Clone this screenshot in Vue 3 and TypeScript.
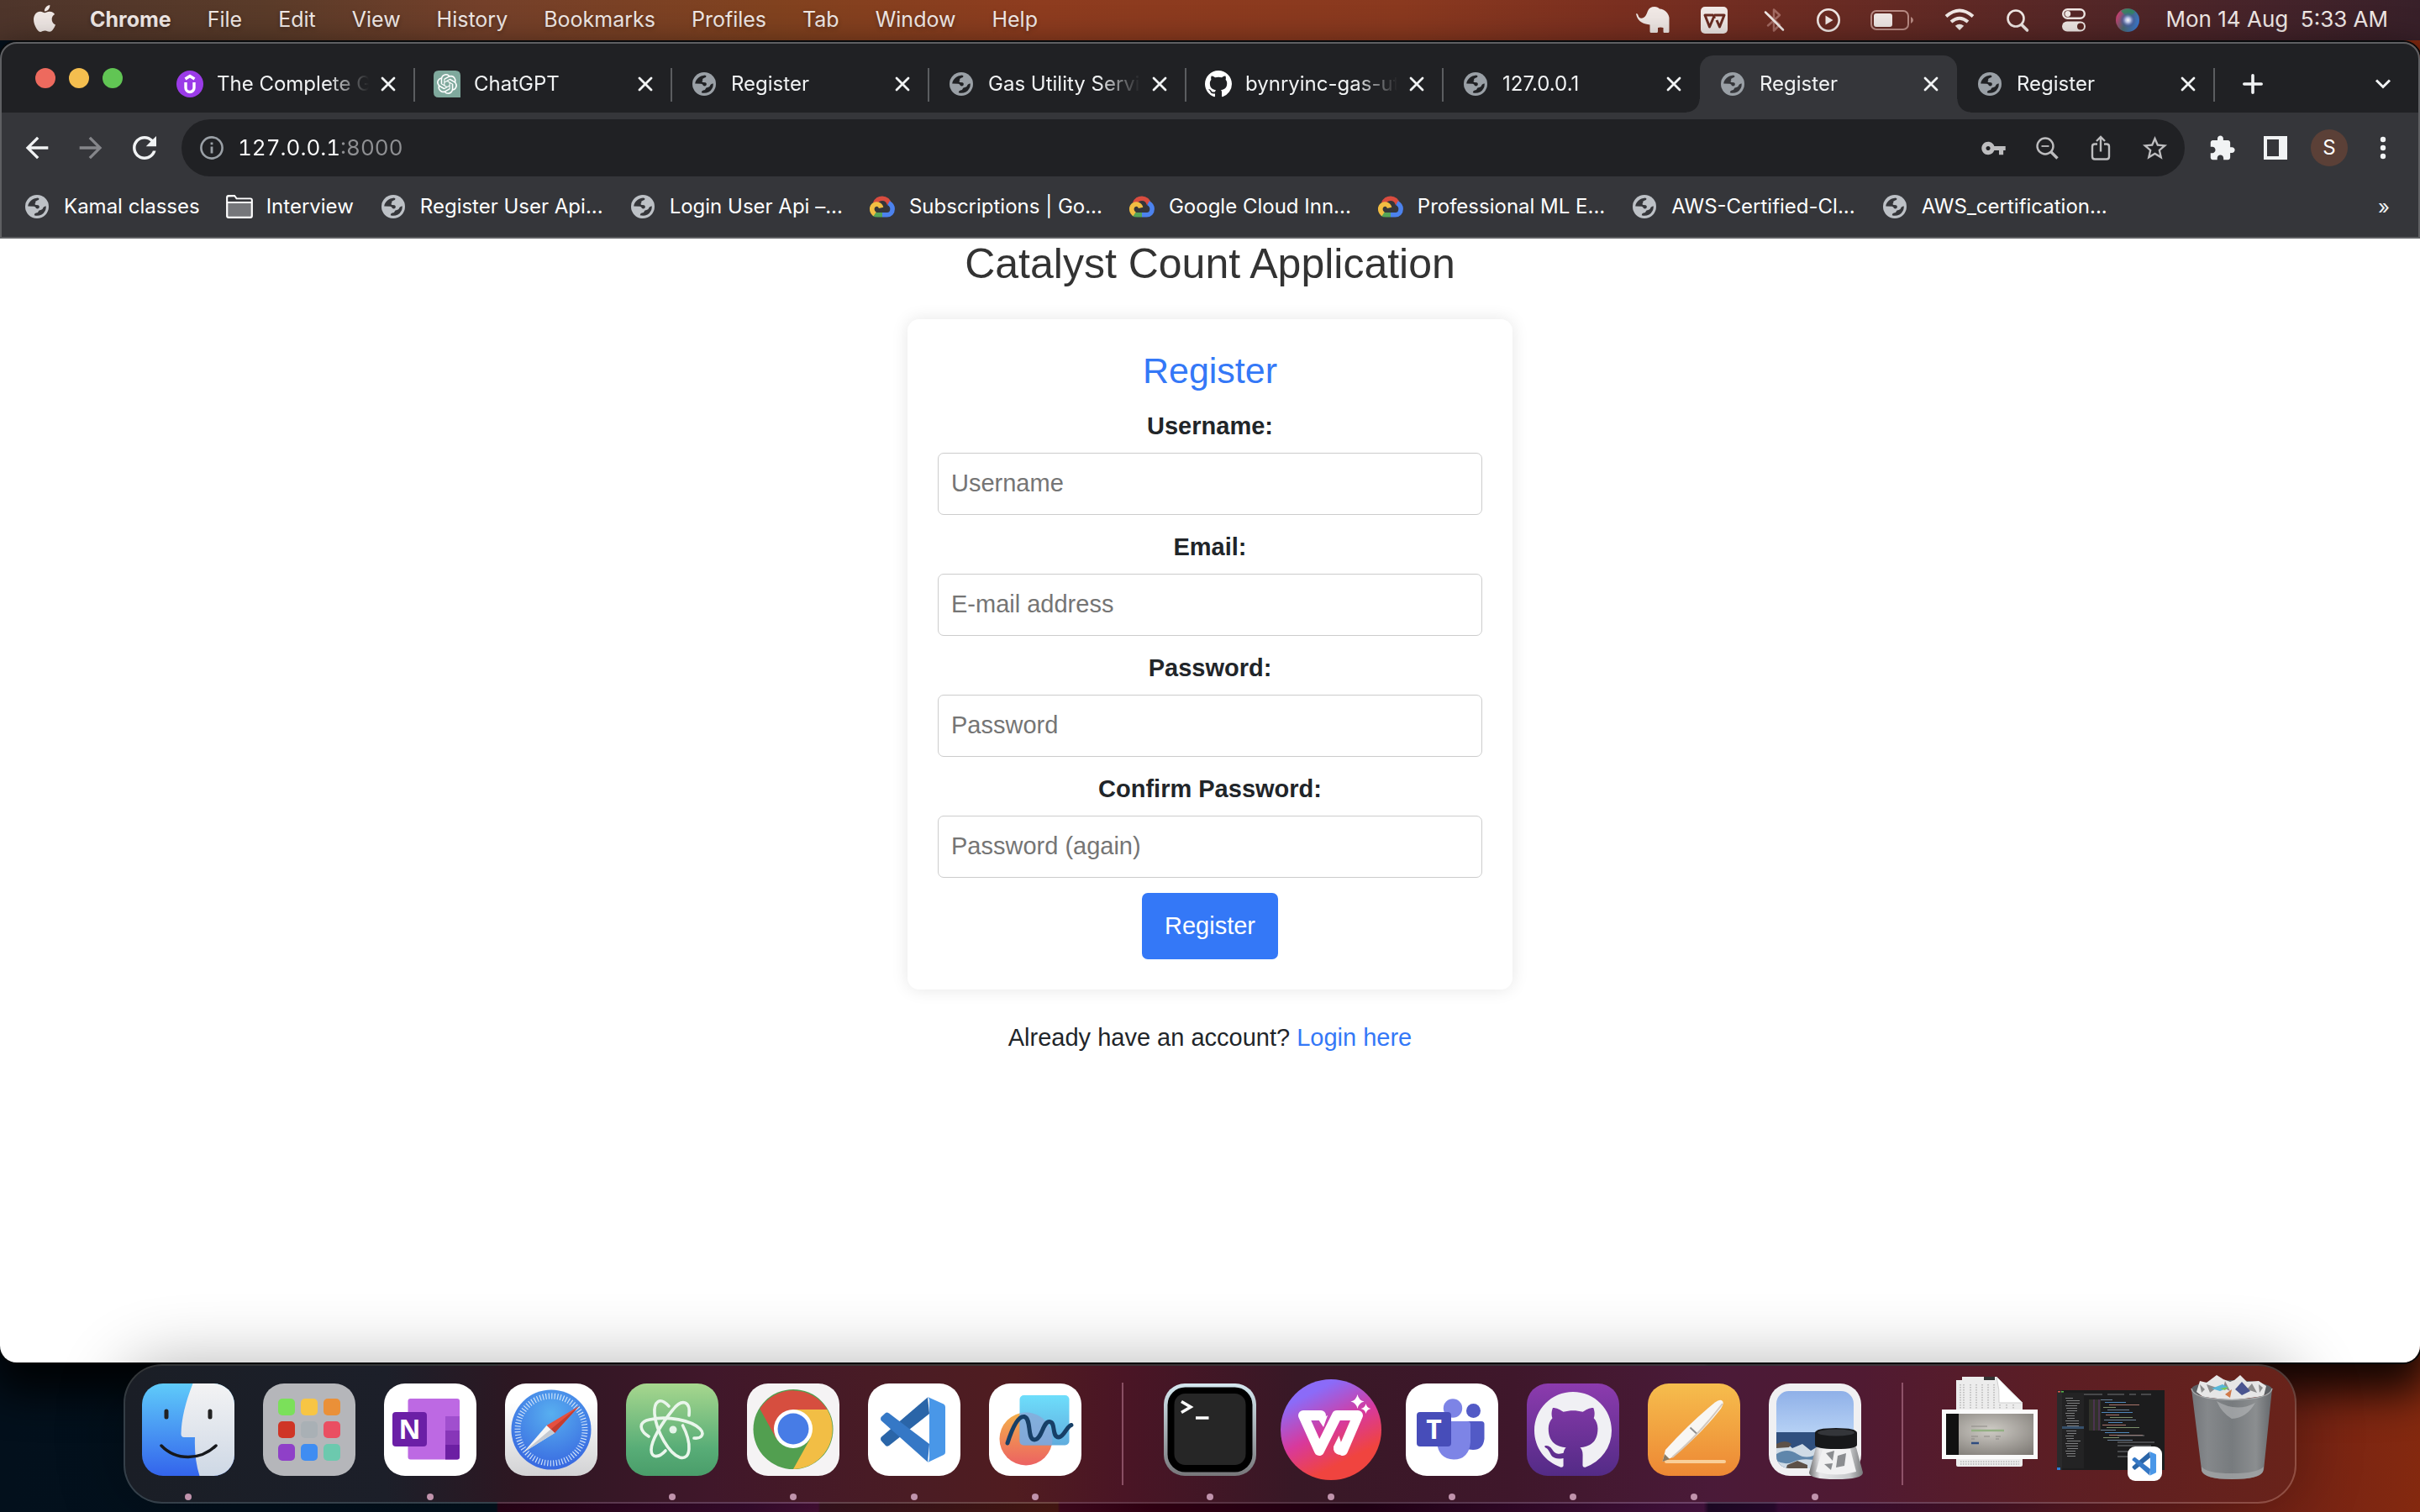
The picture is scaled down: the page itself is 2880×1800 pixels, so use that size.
<script setup lang="ts">
import { ref } from 'vue'

interface Tab {
  title: string
  icon: 'udemy' | 'chatgpt' | 'globe' | 'github'
  active?: boolean
}

interface Bookmark {
  title: string
  icon: 'globe' | 'folder' | 'cloud'
}

interface Field {
  id: string
  label: string
  placeholder: string
  type: string
}

const menus = ['File', 'Edit', 'View', 'History', 'Bookmarks', 'Profiles', 'Tab', 'Window', 'Help']

const tabs: Tab[] = [
  { title: 'The Complete G', icon: 'udemy' },
  { title: 'ChatGPT', icon: 'chatgpt' },
  { title: 'Register', icon: 'globe' },
  { title: 'Gas Utility Servi', icon: 'globe' },
  { title: 'bynryinc-gas-ut', icon: 'github' },
  { title: '127.0.0.1', icon: 'globe' },
  { title: 'Register', icon: 'globe', active: true },
  { title: 'Register', icon: 'globe' },
]

const bookmarks: Bookmark[] = [
  { title: 'Kamal classes', icon: 'globe' },
  { title: 'Interview', icon: 'folder' },
  { title: 'Register User Api...', icon: 'globe' },
  { title: 'Login User Api –...', icon: 'globe' },
  { title: 'Subscriptions | Go...', icon: 'cloud' },
  { title: 'Google Cloud Inn...', icon: 'cloud' },
  { title: 'Professional ML E...', icon: 'cloud' },
  { title: 'AWS-Certified-Cl...', icon: 'globe' },
  { title: 'AWS_certification...', icon: 'globe' },
]

const fields: Field[] = [
  { id: 'username', label: 'Username:', placeholder: 'Username', type: 'text' },
  { id: 'email', label: 'Email:', placeholder: 'E-mail address', type: 'email' },
  { id: 'password', label: 'Password:', placeholder: 'Password', type: 'password' },
  { id: 'password2', label: 'Confirm Password:', placeholder: 'Password (again)', type: 'password' },
]

const address = ref('127.0.0.1:8000')

const githubPath =
  'M8 0C3.58 0 0 3.58 0 8c0 3.54 2.29 6.53 5.47 7.59.4.07.55-.17.55-.38 0-.19-.01-.82-.01-1.49-2.01.37-2.53-.49-2.69-.94-.09-.23-.48-.94-.82-1.13-.28-.15-.68-.52-.01-.53.63-.01 1.08.58 1.23.82.72 1.21 1.87.87 2.33.66.07-.52.28-.87.51-1.07-1.78-.2-3.64-.89-3.64-3.95 0-.87.31-1.59.82-2.15-.08-.2-.36-1.02.08-2.12 0 0 .67-.21 2.2.82.64-.18 1.32-.27 2-.27.68 0 1.36.09 2 .27 1.53-1.04 2.2-.82 2.2-.82.44 1.1.16 1.92.08 2.12.51.56.82 1.27.82 2.15 0 3.07-1.87 3.75-3.65 3.95.29.25.54.73.54 1.48 0 1.07-.01 1.93-.01 2.2 0 .21.15.46.55.38A8.013 8.013 0 0 0 16 8c0-4.42-3.58-8-8-8z'

const launchpad = [
  '#7be05a', '#f7c544', '#ea9038',
  '#cf3526', '#a9b0b5', '#ea4f62',
  '#8f40c8', '#3f8df2', '#6cc9ae',
].map((fill, i) => ({ fill, x: 18 + (i % 3) * 27, y: 18 + Math.floor(i / 3) * 27 }))

const codeColors = ['#6a7f95', '#4f86b8', '#a8746a', '#7c8f6a']
const codeRows = Array.from({ length: 17 }, (_, i) => ({
  y: 24 + i * 3,
  x: 48 + ((i * 5) % 12),
  w: 14 + ((i * 11) % 32),
  fill: codeColors[i % 4],
}))
const fileRows = Array.from({ length: 24 }, (_, i) => ({ y: 22 + i * 3, x: 6 + (i % 3), w: 9 + ((i * 7) % 8) }))
</script>

<template>
  <div class="desktop">
    <header class="menubar">
      <button class="menu apple" aria-label="Apple menu">
        <svg width="26" height="32" viewBox="2.2 0 19.6 24"><path fill="currentColor" d="M12.152 6.896c-.948 0-2.415-1.078-3.96-1.04-2.04.027-3.91 1.183-4.961 3.014-2.117 3.675-.546 9.103 1.519 12.09 1.013 1.454 2.208 3.09 3.792 3.039 1.52-.065 2.09-.987 3.935-.987 1.831 0 2.35.987 3.96.948 1.637-.026 2.676-1.48 3.676-2.948 1.156-1.688 1.636-3.325 1.662-3.415-.039-.013-3.182-1.221-3.22-4.857-.026-3.04 2.48-4.494 2.597-4.559-1.429-2.09-3.623-2.324-4.39-2.376-2-.156-3.675 1.09-4.61 1.09zM15.53 3.83c.843-1.012 1.4-2.427 1.245-3.83-1.207.052-2.662.805-3.532 1.818-.78.896-1.454 2.338-1.273 3.714 1.338.104 2.715-.688 3.559-1.701" /></svg>
      </button>
      <button class="menu app">Chrome</button>
      <button v-for="m in menus" :key="m" class="menu">{{ m }}</button>
      <div class="status">
        <svg width="42" height="48" viewBox="0 0 42 48"><path fill="currentColor" d="M1 16.500C2 16 3 16.500 3.500 18C4 21.500 7 22.500 10 21C12.500 19.500 13.500 17 15 13C16.500 9.500 19 8 23 8C26 8 27.500 9 29 10.500C35 11 39.500 15 40.500 21V37.500Q40.500 39 39 39H34.500Q33.500 39 33.500 37.500V33Q30 32 27 33V37.500Q27 39 25.500 39H19Q17.500 39 17.500 37.500V29.500C11 28.500 3 27 1 16.500Z" /></svg>
        <svg width="36" height="48" viewBox="0 0 36 48"><rect y="8" width="32" height="32" rx="5" fill="currentColor" /><path d="M15 18H5L10.500 32L16.500 18H28L22.500 32L19 24M15 18L16.500 22" fill="none" stroke="#6a2c22" stroke-width="3" stroke-linejoin="round" /></svg>
        <svg width="30" height="48" viewBox="0 0 30 48" fill="none" stroke-linecap="round"><path d="M8 17L22 29.500L15 36.500V11.500L22 18L8 30.500" stroke="#a36a62" stroke-width="2.500" stroke-linejoin="round" /><path d="M5 14.500L26 35.500" stroke="currentColor" stroke-width="2.500" /></svg>
        <svg width="28" height="48" viewBox="0 0 28 48"><circle cx="14" cy="24" r="12.700" fill="none" stroke="currentColor" stroke-width="2.600" /><path d="M10.500 18.500L19.500 24L10.500 29.500Z" fill="currentColor" /></svg>
        <svg width="52" height="48" viewBox="0 0 52 48"><rect x="1" y="13" width="44" height="22" rx="6" fill="none" stroke="#b98b84" stroke-width="2" /><rect x="4" y="16" width="22" height="16" rx="3" fill="currentColor" /><path d="M48 20Q51 21.500 51 24Q51 26.500 48 28Z" fill="#b98b84" /></svg>
        <svg width="38" height="48" viewBox="0 0 38 48" fill="none" stroke="currentColor" stroke-width="4"><path d="M2 19.500Q18 5.500 34 19.500" /><path d="M8 26Q18 17.500 28 26" /><path d="M18 36L12.800 30.800Q18 26.500 23.200 30.800Z" fill="currentColor" stroke="none" /></svg>
        <svg width="30" height="48" viewBox="0 0 30 48" fill="none" stroke="currentColor" stroke-linecap="round"><circle cx="11" cy="22" r="9.500" stroke-width="2.600" /><path d="M18 29.500L24.500 36" stroke-width="3.600" /></svg>
        <svg width="28" height="48" viewBox="0 0 28 48"><rect x="1.200" y="11.200" width="25.600" height="10.600" rx="5.300" fill="none" stroke="currentColor" stroke-width="2.400" /><circle cx="6.800" cy="16.500" r="3.400" fill="currentColor" /><rect y="25.500" width="28" height="12" rx="6" fill="currentColor" /><circle cx="22" cy="31.500" r="4" fill="#5a2824" /></svg>
        <svg width="28" height="48" viewBox="0 0 28 48">
          <defs>
            <radialGradient id="siri" cx=".5" cy=".5" r=".5"><stop offset="0" stop-color="#fff" /><stop offset=".3" stop-color="#b9c4ea" /><stop offset=".7" stop-color="#4b5aa8" stop-opacity=".5" /><stop offset="1" stop-color="#4b5aa8" stop-opacity="0" /></radialGradient>
            <linearGradient id="siriEdge" x1="0" y1=".3" x2="1" y2=".7"><stop offset="0" stop-color="#d43c72" /><stop offset=".45" stop-color="#4a6a70" /><stop offset="1" stop-color="#3a78d8" /></linearGradient>
          </defs>
          <circle cx="14" cy="24" r="14" fill="url(#siriEdge)" /><path d="M6 13Q14 7 23 14L15 22Z" fill="#2f8a62" opacity=".8" /><circle cx="14.500" cy="24" r="10" fill="url(#siri)" />
        </svg>
        <span class="clock">Mon 14 Aug&nbsp; 5:33 AM</span>
      </div>
    </header>

    <section class="window">
      <div class="browser">
        <div class="tabstrip">
          <div class="lights">
            <button class="light red" aria-label="Close"></button>
            <button class="light yellow" aria-label="Minimise"></button>
            <button class="light green" aria-label="Zoom"></button>
          </div>
          <div v-for="(t, i) in tabs" :key="i" class="tab" :class="{ active: t.active, plain: i === 5 || t.active }">
            <span class="favicon">
              <svg v-if="t.icon === 'udemy'" width="32" height="32" viewBox="0 0 32 32"><circle cx="16" cy="16" r="16" fill="#9b3be8" /><path d="M11 14V20.500A5 5 0 0 0 21 20.500V14M10.500 10L16 6.500L21.500 10" fill="none" stroke="#fff" stroke-width="3.400" /></svg>
              <svg v-else-if="t.icon === 'chatgpt'" width="32" height="32" viewBox="0 0 32 32"><path d="M6 0H26Q32 0 32 6V32H6Q0 32 0 26V6Q0 0 6 0Z" fill="#7fa99d" /><path transform="translate(4 4)" fill="#fff" d="M22.282 9.821a5.985 5.985 0 0 0-.516-4.91 6.046 6.046 0 0 0-6.51-2.9A6.065 6.065 0 0 0 4.981 4.182a5.985 5.985 0 0 0-3.998 2.9 6.046 6.046 0 0 0 .743 7.097 5.98 5.98 0 0 0 .511 4.91 6.051 6.051 0 0 0 6.515 2.9A5.985 5.985 0 0 0 13.26 24a6.056 6.056 0 0 0 5.772-4.206 5.99 5.99 0 0 0 3.997-2.9 6.056 6.056 0 0 0-.747-7.073zm-9.022 12.608a4.476 4.476 0 0 1-2.876-1.04l.142-.081 4.778-2.758a.795.795 0 0 0 .393-.681v-6.737l2.02 1.168a.071.071 0 0 1 .038.052v5.583a4.504 4.504 0 0 1-4.495 4.494zm-9.66-4.125a4.47 4.47 0 0 1-.535-3.014l.142.085 4.783 2.759a.771.771 0 0 0 .78 0l5.843-3.369v2.332a.08.08 0 0 1-.033.062L9.74 19.95a4.5 4.5 0 0 1-6.14-1.646zM2.34 7.896a4.485 4.485 0 0 1 2.366-1.973V11.6a.766.766 0 0 0 .388.677l5.814 3.354-2.02 1.168a.076.076 0 0 1-.071 0l-4.83-2.786A4.504 4.504 0 0 1 2.34 7.872zm16.597 3.855l-5.833-3.387L15.119 7.2a.076.076 0 0 1 .071 0l4.83 2.791a4.494 4.494 0 0 1-.676 8.105v-5.678a.79.79 0 0 0-.407-.667zm2.01-3.023l-.141-.085-4.774-2.782a.776.776 0 0 0-.785 0L9.409 9.23V6.897a.066.066 0 0 1 .028-.061l4.83-2.787a4.5 4.5 0 0 1 6.68 4.66zM8.307 12.863l-2.02-1.164a.08.08 0 0 1-.038-.057V6.074a4.5 4.5 0 0 1 7.375-3.453l-.142.08L8.704 5.459a.795.795 0 0 0-.393.681zm1.097-2.365l2.602-1.5 2.607 1.5v2.999l-2.597 1.5-2.607-1.5z" /></svg>
              <svg v-else-if="t.icon === 'github'" width="32" height="32" viewBox="0 0 16 16"><path :d="githubPath" fill="#fff" /></svg>
              <svg v-else class="globe" width="28" height="28" viewBox="0 0 28 28"><circle cx="14" cy="14" r="14" /><path class="land" d="M3.200 13.500C4 8 8.500 4 15 3.400L16.500 4.500Q16.500 6.300 14.500 6.500L12 8Q13 9.500 11.500 10.500Q11.500 12 13 12L15.500 12.300Q17.500 13 16.500 15.500Q15 17 13 16Q12.500 14 10.500 13.800ZM24.800 13.500Q25 20 19.500 23.500Q15 25.500 10.800 24.200Q10.800 22 13 21.500Q15.500 21.500 15.800 19.500Q16 18 18.500 18Q21 17.500 21.500 15Q23 13 24.800 13.500Z" /></svg>
            </span>
            <span class="tab-title">{{ t.title }}</span>
            <button class="tab-close" aria-label="Close tab">
              <svg width="18" height="18" viewBox="0 0 18 18"><path d="M2 2L16 16M16 2L2 16" stroke="currentColor" stroke-width="2.800" stroke-linecap="round" /></svg>
            </button>
          </div>
          <button class="new-tab" aria-label="New tab">
            <svg width="24" height="24" viewBox="0 0 24 24"><path d="M12 1.800V22.200M1.800 12H22.200" stroke="currentColor" stroke-width="3.600" stroke-linecap="round" /></svg>
          </button>
          <button class="tab-search" aria-label="Search tabs">
            <svg width="20" height="14" viewBox="0 0 20 14"><path d="M2 2.500L10 10.500L18 2.500" fill="none" stroke="currentColor" stroke-width="3" /></svg>
          </button>
        </div>

        <div class="toolbar">
          <button class="tool" aria-label="Back"><svg width="40" height="40" viewBox="0 0 24 24"><path fill="#f1f3f4" d="M20 11H7.830l5.590-5.590L12 4l-8 8 8 8 1.410-1.410L7.830 13H20v-2z" /></svg></button>
          <button class="tool" aria-label="Forward"><svg width="40" height="40" viewBox="0 0 24 24"><path fill="#85868a" d="M4 11h12.170l-5.590-5.590L12 4l8 8-8 8-1.410-1.410L16.170 13H4v-2z" /></svg></button>
          <button class="tool" aria-label="Reload"><svg width="42" height="42" viewBox="0 0 24 24"><path fill="#f1f3f4" d="M17.650 6.350C16.200 4.900 14.210 4 12 4c-4.420 0-7.990 3.580-7.990 8s3.570 8 7.990 8c3.730 0 6.840-2.550 7.730-6h-2.080c-.82 2.330-3.040 4-5.650 4-3.310 0-6-2.690-6-6s2.690-6 6-6c1.660 0 3.140.69 4.220 1.780L13 11h7V4l-2.350 2.350z" /></svg></button>
          <div class="omnibox">
            <svg width="28" height="28" viewBox="0 0 28 28"><circle cx="14" cy="14" r="12.600" fill="none" stroke="#9aa0a6" stroke-width="2.600" /><path d="M14 12.500V20.500M14 7.500V10.300" stroke="#9aa0a6" stroke-width="2.800" /></svg>
            <input v-model="address" class="url" aria-label="Address" spellcheck="false" />
            <button class="tool" aria-label="Passwords"><svg width="31" height="31" viewBox="0 0 24 24"><path fill="currentColor" d="M12.650 10C11.830 7.670 9.610 6 7 6c-3.310 0-6 2.690-6 6s2.690 6 6 6c2.610 0 4.830-1.670 5.650-4H17v4h4v-4h2v-4H12.650zM7 14c-1.100 0-2-.9-2-2s.9-2 2-2 2 .9 2 2-.9 2-2 2z" /></svg></button>
            <button class="tool" aria-label="Zoom"><svg width="28" height="28" viewBox="0 0 28 28" fill="none" stroke="currentColor"><circle cx="12" cy="12" r="9.500" stroke-width="2.400" /><path d="M7.500 12H16.500" stroke-width="1.800" /><path d="M18.500 18.500L26.500 26.500" stroke-width="3.400" /></svg></button>
            <button class="tool" aria-label="Share"><svg width="28" height="32" viewBox="0 0 28 32" fill="none" stroke="currentColor" stroke-width="2.400"><path d="M10 11.500H7Q4 11.500 4 14.500V26.500Q4 29.500 7 29.500H21Q24 29.500 24 26.500V14.500Q24 11.500 21 11.500H18" /><path d="M14 20.500V3.500M9 8L14 3L19 8" /></svg></button>
            <button class="tool" aria-label="Bookmark this tab"><svg width="35" height="35" viewBox="0 0 24 24"><path fill="currentColor" d="M22 9.240l-7.190-.62L12 2 9.190 8.630 2 9.240l5.460 4.730L5.820 21 12 17.270 18.180 21l-1.630-7.030L22 9.240zM12 15.400l-3.760 2.270 1-4.280-3.320-2.880 4.380-.38L12 6.100l1.710 4.040 4.380.38-3.320 2.880 1 4.280L12 15.400z" /></svg></button>
          </div>
          <button class="tool" aria-label="Extensions"><svg width="33" height="33" viewBox="0 0 24 24"><path fill="#f1f3f4" d="M20.500 11H19V7c0-1.100-.9-2-2-2h-4V3.500C13 2.120 11.880 1 10.500 1S8 2.120 8 3.500V5H4c-1.100 0-1.990.9-1.990 2v3.800H3.500c1.490 0 2.700 1.210 2.700 2.700s-1.210 2.700-2.700 2.700H2V20c0 1.100.9 2 2 2h3.800v-1.500c0-1.490 1.210-2.700 2.700-2.700 1.490 0 2.700 1.210 2.700 2.700V22H17c1.100 0 2-.9 2-2v-4h1.500c1.380 0 2.500-1.120 2.500-2.500S21.880 11 20.500 11z" /></svg></button>
          <button class="tool" aria-label="Side panel"><svg width="28" height="28" viewBox="0 0 28 28"><path fill="#f1f3f4" fill-rule="evenodd" d="M0 0H28V28H0ZM4 4V24H18V4Z" /></svg></button>
          <button class="tool" aria-label="Profile"><span class="avatar">S</span></button>
          <button class="tool" aria-label="More"><svg width="28" height="28" viewBox="0 0 28 28" fill="#f1f3f4"><circle cx="14" cy="4" r="3.200" /><circle cx="14" cy="14" r="3.200" /><circle cx="14" cy="24" r="3.200" /></svg></button>
        </div>

        <nav class="bookmarks">
          <a v-for="b in bookmarks" :key="b.title" class="bookmark" href="#">
            <span class="favicon">
              <svg v-if="b.icon === 'folder'" width="32" height="28" viewBox="0 0 32 28"><path d="M1.200 26V3Q1.200 1.200 3 1.200H10L12.500 4.500H29Q30.800 4.500 30.800 6.500V25Q30.800 26.800 29 26.800H3Q1.200 26.800 1.200 25Z" fill="#75767a" stroke="#fff" stroke-width="2.200" /><path d="M2.400 3L10 2.400L12 5.600H29.600V8H2.400Z" fill="#35363a" /><path d="M1.200 9H30.800" stroke="#fff" stroke-width="2" /></svg>
              <svg v-else-if="b.icon === 'cloud'" width="32" height="28" viewBox="-1 -1 34 30" fill="none" stroke-width="6"><path d="M7 9.500C9 5 12.500 3.500 16 3.500C20.500 3.500 24 6.500 25 11" stroke="#d94c3f" /><path d="M24 9.500C28 11.500 29 14 29 17C29 22 25.500 24.500 22 24.500H16" stroke="#4c82ee" /><path d="M16 24.500H10Q7 24.500 5 23" stroke="#54a457" /><path d="M6.500 23.500C1.500 20 2 14 6 11.500C9.500 9.700 13.500 11.500 14.500 15.500" stroke="#f2bd42" /></svg>
              <svg v-else class="globe" width="28" height="28" viewBox="0 0 28 28"><circle cx="14" cy="14" r="14" /><path class="land" d="M3.200 13.500C4 8 8.500 4 15 3.400L16.500 4.500Q16.500 6.300 14.500 6.500L12 8Q13 9.500 11.500 10.500Q11.500 12 13 12L15.500 12.300Q17.500 13 16.500 15.500Q15 17 13 16Q12.500 14 10.500 13.800ZM24.800 13.500Q25 20 19.500 23.500Q15 25.500 10.800 24.200Q10.800 22 13 21.500Q15.500 21.500 15.800 19.500Q16 18 18.500 18Q21 17.500 21.500 15Q23 13 24.800 13.500Z" /></svg>
            </span>
            {{ b.title }}
          </a>
          <button class="overflow" aria-label="More bookmarks">»</button>
        </nav>
      </div>

      <main class="page">
        <h1>Catalyst Count Application</h1>
        <form class="card" @submit.prevent>
          <h2>Register</h2>
          <div v-for="f in fields" :key="f.id" class="field">
            <label :for="f.id">{{ f.label }}</label>
            <input :id="f.id" :type="f.type" :placeholder="f.placeholder" />
          </div>
          <button class="submit" type="submit">Register</button>
        </form>
        <p class="login">Already have an account? <a href="#">Login here</a></p>
      </main>
    </section>

    <footer class="dock">
      <button class="slot" aria-label="Finder">
        <svg class="icon" viewBox="0 0 110 110">
          <defs>
            <linearGradient id="finderA" x2="0" y2="1"><stop offset="0" stop-color="#5fcbfa" /><stop offset="1" stop-color="#3364ec" /></linearGradient>
            <linearGradient id="finderB" x2="0" y2="1"><stop offset="0" stop-color="#f3f3f4" /><stop offset="1" stop-color="#ced8e5" /></linearGradient>
            <clipPath id="tile"><rect width="110" height="110" rx="25" /></clipPath>
          </defs>
          <g clip-path="url(#tile)"><rect width="110" height="110" fill="url(#finderA)" /><path d="M60.500 0Q47 34 46.500 60Q46.500 64 50 64H63Q62 90 68.500 110H110V0Z" fill="url(#finderB)" /></g>
          <path d="M29 33V40M81 33V40" stroke="#222" stroke-width="5" stroke-linecap="round" /><path d="M23 74Q36 87.500 55 87.500Q74 87.500 88 74" fill="none" stroke="#16181c" stroke-width="3.500" stroke-linecap="round" />
        </svg>
        <i class="dot"></i>
      </button>
      <button class="slot" aria-label="Launchpad">
        <svg class="icon" viewBox="0 0 110 110"><rect width="110" height="110" rx="25" fill="#b5b6ba" /><rect v-for="s in launchpad" :key="s.fill" :x="s.x" :y="s.y" width="20" height="20" rx="5" :fill="s.fill" /></svg>
      </button>
      <button class="slot" aria-label="OneNote">
        <svg class="icon" viewBox="0 0 110 110"><rect width="110" height="110" rx="25" fill="#fff" /><rect x="28.500" y="18" width="61.500" height="72.500" rx="3" fill="#bd69e3" /><path d="M73 39H90V56H73Z" fill="#a04fce" /><path d="M73 56H90V73H73Z" fill="#8736b8" /><path d="M73 73H90V87.500Q90 90.500 87 90.500H73Z" fill="#6c1fa3" /><rect x="10" y="34" width="41" height="41" rx="4" fill="#6b1fa6" /><text x="30.500" y="66" class="glyph">N</text></svg>
        <i class="dot"></i>
      </button>
      <button class="slot" aria-label="Safari">
        <svg class="icon" viewBox="0 0 110 110">
          <defs>
            <linearGradient id="safariA" x2="0" y2="1"><stop offset=".2" stop-color="#fff" /><stop offset="1" stop-color="#d2d2d4" /></linearGradient>
            <radialGradient id="safariB" cx=".5" cy=".3" r=".7"><stop offset="0" stop-color="#58aff0" /><stop offset="1" stop-color="#3868e0" /></radialGradient>
          </defs>
          <rect width="110" height="110" rx="25" fill="url(#safariA)" /><circle cx="55" cy="55" r="47.500" fill="url(#safariB)" /><circle cx="55" cy="55" r="40" fill="none" stroke="#d5e6fa" stroke-width="7" stroke-dasharray="1.100 2.390" />
          <path d="M88 27L49.500 50L59 59Z" fill="#e5503f" /><path d="M88 27L54.500 54.500L59 59Z" fill="#c43d30" /><path d="M22 82L49.500 50L59 59Z" fill="#f5f5f5" /><path d="M22 82L54.500 54.500L59 59Z" fill="#c5cad2" />
        </svg>
      </button>
      <button class="slot" aria-label="Atom">
        <svg class="icon" viewBox="0 0 110 110">
          <defs><linearGradient id="atom" x2="0" y2="1"><stop offset="0" stop-color="#a7d78e" /><stop offset=".7" stop-color="#58ad77" /><stop offset="1" stop-color="#4a9d6a" /></linearGradient></defs>
          <rect width="110" height="110" rx="25" fill="url(#atom)" />
          <g fill="none" stroke="#eaf6ec" stroke-width="3.600" stroke-linecap="round"><path d="M27 63C16 56 14 46 28 43C50 38 78 44 88 54C94 60 90 66 81 65" /><path d="M51 27C40 15 33 22 34 36C36 58 52 84 64 88C78 92 78 70 67.500 50" /><path d="M75 38C77 20 66 18 56 31C42 48 30 68 30 79C30 90 40 88 47 80" /></g><circle cx="56" cy="55" r="4.500" fill="#e6f5ea" />
        </svg>
        <i class="dot"></i>
      </button>
      <button class="slot" aria-label="Google Chrome">
        <svg class="icon" viewBox="0 0 110 110"><rect width="110" height="110" rx="25" fill="#f5f3f4" /><circle cx="55" cy="54.500" r="47.500" fill="#529f50" /><path d="M15.200 30A47.500 47.500 0 0 1 95.500 31H55L35 66Z" fill="#d64e3f" /><path d="M95.500 31A47.500 47.500 0 0 1 55 102L75 66L55 31Z" fill="#f2be45" /><circle cx="55" cy="54" r="23" fill="#fff" /><circle cx="55" cy="54" r="18.500" fill="#477ce6" /></svg>
        <i class="dot"></i>
      </button>
      <button class="slot" aria-label="Visual Studio Code">
        <svg class="icon" viewBox="0 0 110 110"><rect width="110" height="110" rx="25" fill="#fff" /><g id="code-logo"><path d="M71 16.500L15.500 64Q14.500 66 15.500 68L21 74Q22.500 75.500 25 74L73 36Z" fill="#2a65a8" /><path d="M71 93.500L15.500 44Q14.500 42 15.500 40L21 35Q22.500 34 25 35.500L73 72Z" fill="#3578c6" /><path d="M71 16L90 24.500Q92 25.500 92 28V82Q92 84 90 85L71 94Q73 92 73 89V20Q73 18 71 16Z" fill="#4997e8" /></g></svg>
        <i class="dot"></i>
      </button>
      <button class="slot" aria-label="Freeform">
        <svg class="icon" viewBox="0 0 110 110">
          <defs>
            <linearGradient id="freeA" x2="0" y2="1"><stop offset="0" stop-color="#f3b04a" /><stop offset="1" stop-color="#ec6262" /></linearGradient>
            <linearGradient id="freeB" x2="0" y2="1"><stop offset="0" stop-color="#66dcfb" /><stop offset="1" stop-color="#59a8dc" /></linearGradient>
          </defs>
          <rect width="110" height="110" rx="25" fill="#fff" /><circle cx="44" cy="66" r="31.500" fill="url(#freeA)" /><rect x="36.500" y="14" width="59" height="59.500" rx="5" fill="url(#freeB)" opacity=".95" /><path d="M36.500 35.400A31.500 31.500 0 0 1 74.600 73.500H41.500Q36.500 73.500 36.500 68.500Z" fill="#8fa6d8" opacity=".7" />
          <path d="M22 71C28 52 35 38 42 39.500C51 42 45 67 54 67C63 67 64 45 72 45.500C80 46 74 64 83 64C90 63 92 51 98 49.500" fill="none" stroke="#173f66" stroke-width="5" stroke-linecap="round" />
        </svg>
        <i class="dot"></i>
      </button>
      <span class="divider"></span>
      <button class="slot" aria-label="Terminal">
        <svg class="icon" viewBox="0 0 110 110">
          <defs><linearGradient id="term" x2="0" y2="1"><stop offset="0" stop-color="#d5e8f0" /><stop offset="1" stop-color="#77777a" /></linearGradient></defs>
          <rect width="110" height="110" rx="25" fill="url(#term)" /><rect x="4.500" y="4.500" width="101" height="101" rx="21" fill="#000" /><rect x="12.500" y="12" width="85" height="85" rx="13" fill="#262626" /><path d="M21 21.500L32 28L21 34.500M38 41H53.500" fill="none" stroke="#fff" stroke-width="3.600" />
        </svg>
        <i class="dot"></i>
      </button>
      <button class="slot" aria-label="WPS Office">
        <svg class="icon big" viewBox="0 0 120 120">
          <defs><linearGradient id="wps" x1=".25" y1=".05" x2=".7" y2=".95"><stop offset=".1" stop-color="#8b6bf8" /><stop offset=".5" stop-color="#d8399c" /><stop offset=".85" stop-color="#f0443f" /></linearGradient></defs>
          <circle cx="60" cy="60" r="60" fill="url(#wps)" /><path d="M48 43H27L46 85L67 43H92L74 85" fill="none" stroke="#fff" stroke-width="12" stroke-linejoin="round" stroke-linecap="round" /><path d="M45 48L56 43L51 57ZM63 80Q66 74 69.500 67L75 85L70 90Q62 88 63 80Z" fill="#fff" /><path d="M91.500 18Q93 25 99.500 26.500Q93 28 91.500 35Q90 28 83.500 26.500Q90 25 91.500 18ZM101.500 29Q102.500 34 107.500 35Q102.500 36 101.500 41Q100.500 36 95.500 35Q100.500 34 101.500 29Z" fill="#fff" />
        </svg>
        <i class="dot"></i>
      </button>
      <button class="slot" aria-label="Microsoft Teams">
        <svg class="icon" viewBox="0 0 110 110"><rect width="110" height="110" rx="25" fill="#fff" /><circle cx="80.500" cy="32.500" r="8.500" fill="#525ac6" /><path d="M66 45H90Q93.500 45 93.500 48.500V66Q92 79 80 79Q70 79 66 70Z" fill="#525ac6" /><circle cx="56" cy="29.500" r="11.200" fill="#7d84e6" /><path d="M37 45H73Q77 45 77 49V70Q75 90.500 57 90.500Q39 90 37 70Z" fill="#7d84e6" /><rect x="13" y="34" width="41" height="41" rx="4" fill="#474db9" /><text x="33.500" y="66" class="glyph">T</text></svg>
        <i class="dot"></i>
      </button>
      <button class="slot" aria-label="GitHub Desktop">
        <svg class="icon" viewBox="0 0 110 110">
          <defs><linearGradient id="octo" x2="0" y2="1"><stop offset="0" stop-color="#8c3bae" /><stop offset="1" stop-color="#532b86" /></linearGradient></defs>
          <rect width="110" height="110" rx="25" fill="url(#octo)" /><path :d="githubPath" transform="translate(9 10) scale(5.750)" fill="#f0f0f4" />
        </svg>
        <i class="dot"></i>
      </button>
      <button class="slot" aria-label="Pages">
        <svg class="icon" viewBox="0 0 110 110">
          <defs><linearGradient id="pages" x2="0" y2="1"><stop offset="0" stop-color="#f6bd4d" /><stop offset="1" stop-color="#ed8834" /></linearGradient></defs>
          <rect width="110" height="110" rx="25" fill="url(#pages)" /><path d="M22 93H91" stroke="#f9cf9a" stroke-width="4" stroke-linecap="round" /><path d="M17.500 93L21 79Q50 47 80 22.500Q86 18 89 21Q91 24 87 30Q62 62 29 88Z" fill="#f8f6f3" /><path d="M29 88Q60 62 89 24" fill="none" stroke="#d3c8bd" stroke-width="2" /><path d="M17.500 93L20 84L26 90Z" fill="#8a7a62" /><path d="M50.500 52.500L58 59.500" stroke="#8f8f8f" stroke-width="2" />
        </svg>
        <i class="dot"></i>
      </button>
      <button class="slot" aria-label="Preview">
        <svg class="icon" viewBox="0 0 110 110">
          <defs>
            <clipPath id="photo"><rect x="9" y="9" width="92" height="92" rx="15" /></clipPath>
            <linearGradient id="sky" x2="0" y2="1"><stop offset="0" stop-color="#8fb0e8" /><stop offset="1" stop-color="#b7d2f5" /></linearGradient>
            <linearGradient id="jar"><stop offset="0" stop-color="#6e6e70" /><stop offset=".2" stop-color="#e8e8ea" /><stop offset=".75" stop-color="#c8cacc" /><stop offset="1" stop-color="#77787a" /></linearGradient>
          </defs>
          <rect width="110" height="110" rx="25" fill="#f0f0f2" />
          <g clip-path="url(#photo)"><rect x="9" y="9" width="92" height="51" fill="url(#sky)" /><rect x="9" y="58" width="92" height="45" fill="#30507f" /><path d="M9 74L20 70L28 77L40 72L50 80L60 74V101H9Z" fill="#cfdbe6" /><path d="M9 84Q22 76 34 84T60 82V92Q40 88 30 93T9 92Z" fill="#5f86ab" /><path d="M9 72Q20 66 27 72L24 76L9 77ZM22 97L34 92L46 97V103H20Z" fill="#5d5148" /></g>
          <path d="M56 76L48 106Q48 114 80 114Q112 114 112 106L104 76Z" fill="url(#jar)" /><path d="M64 78L56 105Q80 112 104 105L97 78Z" fill="#f1f1f2" /><path d="M68 83L78 80L76 92ZM82 86L92 83L90 98L80 100ZM66 96L76 95L74 103Z" fill="#8b8d90" />
          <path d="M55 59Q55 53 80 53Q105 53 105 59V73Q105 78 80 78Q55 78 55 73Z" fill="#17181a" /><ellipse cx="80" cy="58.500" rx="22" ry="4" fill="#34363a" />
        </svg>
        <i class="dot"></i>
      </button>
      <span class="divider"></span>
      <button class="slot" aria-label="Documents">
        <svg class="icon big" viewBox="0 0 120 120">
          <defs><radialGradient id="shot" cx=".5" cy=".4" r=".8"><stop offset="0" stop-color="#cfccc6" /><stop offset="1" stop-color="#77736e" /></radialGradient></defs>
          <path d="M20 1H27V-3H68L99 28V102Q99 104 97 104H22Q20 104 20 102Z" fill="#ececec" /><path d="M25 6V38M29 6V38M37 6V38M44 6V38M51 6V38M58 6V38M65 6V38M72 30V38M80 30V38M88 30V38M25 98H95M25 101H95" stroke="#c3c3c3" stroke-width="2" stroke-dasharray="1.500 1.500" /><path d="M53 -3H66V1H53Z" fill="#333" /><path d="M68 -3Q72 12 71 28H99Q84 14 68 -3Z" fill="#fff" stroke="#cfcfcf" />
          <rect x="3" y="36" width="114" height="59" fill="#fafafa" /><rect x="8" y="41" width="104" height="49" fill="url(#shot)" /><path d="M8 41H23V90H8Z" fill="#111" /><path d="M38 61H77" stroke="#93b083" stroke-width="2.500" /><path d="M38 56H57M38 68H46M53 68H60M67 68H73M38 71H42M67 71H71" stroke="#8d8a86" stroke-width="1" /><path d="M38 76H47" stroke="#2f4c80" stroke-width="2.500" />
        </svg>
      </button>
      <button class="slot" aria-label="Editor window">
        <svg class="icon big" viewBox="0 0 120 120">
          <rect x="-4" y="13" width="128" height="95" fill="#1c1c1d" /><rect x="-4" y="13" width="6" height="95" fill="#2a2a2b" /><rect x="2" y="16" width="26" height="90" fill="#232324" />
          <path d="M34 24H48V61H34Z" fill="#31322a" /><path d="M40 24V61M46 24V61" stroke="#4b3350" stroke-width="2" /><path d="M-3 14.800H0" stroke="#e8574a" stroke-width="1.500" /><path d="M1 14.800H4" stroke="#5bbf4f" stroke-width="1.500" /><path d="M28 18H50M56 18H76M82 18H90M96 18H108" stroke="#56575a" stroke-width="1.500" />
          <rect v-for="r in fileRows" :key="'f' + r.y" :x="r.x" :y="r.y" :width="r.w" height="1" fill="#7d7e80" />
          <rect v-for="r in codeRows" :key="'c' + r.y" :x="r.x" :y="r.y" :width="r.w" height="1" :fill="r.fill" />
          <path d="M68 67H100M68 75H112M68 79H108M68 86H84M68 92H82" stroke="#77787c" stroke-width="1" /><path d="M2 57.500H28" stroke="#37506b" stroke-width="3" /><path d="M-4 105H0V108H-4Z" fill="#2d7dd2" />
          <rect x="80" y="80" width="41" height="41" rx="9" fill="#fff" /><use href="#code-logo" transform="translate(80 80) scale(.37)" />
        </svg>
      </button>
      <button class="slot" aria-label="Trash">
        <svg class="icon big" viewBox="0 0 120 120">
          <defs><linearGradient id="bin"><stop offset="0" stop-color="#73767a" /><stop offset=".2" stop-color="#85888b" /><stop offset=".5" stop-color="#777b7e" /><stop offset=".8" stop-color="#8b8e90" /><stop offset="1" stop-color="#65686c" /></linearGradient></defs>
          <ellipse cx="60" cy="12" rx="48" ry="11" fill="#5c5f63" /><path d="M18 15L22 2L30 4L42 -5L50 0L58 3L63 1L70 -5L78 3L92 2L101 8L98 20L60 25L26 21Z" fill="#e6e6e6" /><path d="M30 6L42 10L34 16ZM84 5L90 16L78 12ZM52 2L58 14L50 10ZM22 6L28 12L24 16ZM92 6L97 10L93 16Z" fill="#8c8c8c" /><path d="M36 11L49 6L56 10L46 14Z" fill="#58b7d8" /><path d="M64 12L72 3L82 14L72 19Z" fill="#4a5590" /><path d="M52 18L60 12L58 22Z" fill="#d07a4a" /><path d="M46 11L56 9L52 13Z" fill="#7cc954" />
          <path d="M12 11Q14 23 60 24Q106 23 108 11L98 108Q95 119 60 119Q27 119 24 108Z" fill="url(#bin)" /><path d="M24 104Q30 112 60 112Q90 112 98 104L97 110Q93 119 60 119Q27 119 24 109Z" fill="#a5a8aa" opacity=".7" /><path d="M42 26Q66 40 88 28Q78 46 60 47Q48 40 42 26Z" fill="#c2c4c6" opacity=".5" /><path d="M12 11Q14 24 60 24.500Q106 24 108 11" fill="none" stroke="#a9acae" stroke-width="1.500" />
        </svg>
      </button>
    </footer>
  </div>
</template>

<style>
body {
  margin: 0;
}
</style>

<style scoped>
.desktop {
  display: flex;
  flex-direction: column;
  box-sizing: border-box;
  min-height: 100vh;
  overflow: hidden;
  font-family: Inter, "Liberation Sans", sans-serif;
  background: linear-gradient(90deg, #03101c 0, #03121e 20.500%, #2b0318 20.600%, #3a0c30 31%, #481038 33.800%, #3a1420 33.900%, #4c1a14 43.700%, #44081f 43.800%, #350014 48%, #240016 56%, #4a1444 70.400%, #200a28 70.600%, #2b0a30 73.300%, #3c0c3a 73.500%, #4a1428 82%, #6e2018 92%, #84290f 100%);
}

button {
  display: flex;
  align-items: center;
  justify-content: center;
  margin: 0;
  padding: 0;
  border: 0;
  background: none;
  color: inherit;
  font: inherit;
}

svg {
  display: block;
  flex: none;
}

.menubar {
  display: flex;
  align-items: center;
  gap: 43px;
  height: 48px;
  padding: 0 38px 0 40px;
  color: #f1e9e6;
  font-size: 25px;
  line-height: 46px;
  background: linear-gradient(90deg, #4e352b 0, #5a3b29 11%, #74402a 20%, #81421f 32%, #8e3c1f 43%, #8a391f 58%, #7a2f20 67%, #5f2925 81%, #44232a 94%, #382029 100%);
}

.menu {
  height: 48px;
  padding-bottom: 2px;
  text-shadow: 0 2px 5px rgba(0, 0, 0, 0.3);
}

.menu.apple {
  padding: 0;
  margin: 0 -2px 4px 0;
}

.menu.app {
  font-weight: 700;
}

.status {
  display: flex;
  align-items: center;
  gap: 36px;
  margin-left: auto;
}

.clock {
  padding-bottom: 2px;
  margin-left: -4px;
  font-size: 26px;
  white-space: nowrap;
}

.window {
  display: flex;
  flex: 1;
  flex-direction: column;
  margin-top: 2px;
  border-radius: 20px;
  box-shadow: 0 0 0 2px #080a0c, 0 26px 50px 10px rgba(0, 0, 0, 0.85);
}

.browser {
  border: 2px solid #5e5f62;
  border-radius: 20px 20px 0 0;
  background: #202124;
  color: #f1f3f4;
}

.tabstrip {
  display: flex;
  align-items: flex-end;
  height: 82px;
  padding-right: 10px;
}

.lights {
  display: flex;
  flex: none;
  align-items: center;
  gap: 16px;
  width: 145px;
  height: 82px;
  padding-left: 40px;
}

.light {
  width: 24px;
  height: 24px;
  border-radius: 50%;
}

.red {
  background: #ed6a5e;
}

.yellow {
  background: #f4be4f;
}

.green {
  background: #61c554;
}

.tab {
  position: relative;
  display: flex;
  flex: 0 1 306px;
  align-items: center;
  box-sizing: border-box;
  min-width: 0;
  height: 68px;
  padding: 0 22px 0 23px;
}

.tab::after {
  content: "";
  position: absolute;
  right: -1px;
  top: 15px;
  width: 2px;
  height: 40px;
  background: #5b5d60;
}

.tab.plain::after {
  display: none;
}

.tab.active {
  border-radius: 16px 16px 0 0;
  background: #35363a;
}

.tab.active::before {
  content: "";
  position: absolute;
  left: -16px;
  right: -16px;
  bottom: 0;
  height: 16px;
  background: radial-gradient(circle at 0 0, transparent 15px, #35363a 16px) 0 0 / 16px 16px no-repeat, radial-gradient(circle at 100% 0, transparent 15px, #35363a 16px) 100% 0 / 16px 16px no-repeat;
}

.favicon {
  display: flex;
  flex: none;
  justify-content: center;
  width: 32px;
}

.globe {
  fill: #9aa0a6;
}

.land {
  fill: #202124;
}

.active .land,
.bookmark .land {
  fill: #35363a;
}

.bookmark .globe {
  fill: #bdc1c6;
}

.tab-title {
  flex: 1;
  min-width: 0;
  margin-left: 16px;
  font-size: 24px;
  line-height: 32px;
  white-space: nowrap;
  mask-image: linear-gradient(90deg, #000 calc(100% - 50px), transparent 100%);
}

.tab-close {
  width: 18px;
  margin-left: 14px;
}

.new-tab {
  flex: none;
  width: 92px;
  height: 68px;
}

.tab-search {
  flex: none;
  width: 64px;
  height: 68px;
  margin-left: auto;
}

.toolbar {
  display: flex;
  align-items: center;
  height: 84px;
  padding: 0 10px;
  background: #35363a;
}

.tool {
  flex: none;
  width: 64px;
  height: 64px;
}

.omnibox {
  display: flex;
  flex: 1;
  align-items: center;
  box-sizing: border-box;
  height: 68px;
  margin: 0 12px;
  padding: 0 4px 0 22px;
  border-radius: 34px;
  background: #202124;
  color: #bdbdbf;
}

.url {
  flex: 1;
  min-width: 0;
  height: 40px;
  margin-left: 17px;
  padding: 0;
  border: 0;
  outline: 0;
  font: 26px/40px Inter, "Liberation Sans", sans-serif;
  font-variant-numeric: tabular-nums;
  color: transparent;
  background: linear-gradient(90deg, #fff 121px, #8f9093 121px);
  background-clip: text;
  -webkit-background-clip: text;
}

.avatar {
  width: 44px;
  height: 44px;
  border-radius: 50%;
  background: #5b4037;
  color: #fff;
  font-size: 24px;
  line-height: 44px;
  text-align: center;
}

.bookmarks {
  display: flex;
  align-items: center;
  gap: 31px;
  height: 56px;
  padding: 0 34px 8px 26px;
  background: #35363a;
}

.bookmark {
  display: flex;
  align-items: center;
  gap: 16px;
  color: #fff;
  font-size: 24px;
  line-height: 32px;
  text-decoration: none;
  white-space: nowrap;
}

.overflow {
  margin-left: auto;
  font-size: 24px;
}

.page {
  display: flex;
  flex: 1;
  flex-direction: column;
  align-items: center;
  padding: 0 24px;
  border-radius: 0 0 20px 20px;
  background: #fff;
  color: #212529;
  font: 29px/43px "Liberation Sans", Arial, sans-serif;
}

h1,
h2,
p {
  margin: 0;
  font-weight: 400;
}

h1 {
  margin-bottom: 36px;
  color: #333;
  font-size: 50px;
  line-height: 60px;
}

.card {
  display: flex;
  flex-direction: column;
  align-items: center;
  box-sizing: border-box;
  width: 100%;
  max-width: 720px;
  padding: 36px;
  border-radius: 14px;
  background: #fff;
  box-shadow: 0 0 20px rgba(0, 0, 0, 0.1);
}

h2 {
  margin-bottom: 20px;
  color: #3478f7;
  font-size: 43px;
  line-height: 50px;
}

.field {
  width: 100%;
  margin-bottom: 17px;
}

.field:last-of-type {
  margin-bottom: 18px;
}

.field label {
  display: block;
  margin-bottom: 10px;
  font-weight: 700;
  text-align: center;
}

.field input {
  box-sizing: border-box;
  display: block;
  width: 100%;
  height: 74px;
  padding: 0 15px 2px;
  border: 1px solid #ccc;
  border-radius: 7px;
  background: #fff;
  color: #212529;
  font: inherit;
}

.field input::placeholder {
  color: #757575;
}

.submit {
  height: 79px;
  padding: 0 27px;
  border-radius: 7px;
  background: #3478f7;
  color: #fff;
}

.login {
  margin-top: 36px;
}

.login a {
  color: #3478f7;
  text-decoration: none;
}

.dock {
  position: relative;
  display: flex;
  align-self: center;
  margin: 2px 0 10px;
  padding: 0 3px 2px;
  border: 2px solid rgba(255, 255, 255, 0.2);
  border-radius: 46px;
  background: linear-gradient(90deg, #1a1e26 0, #1c1f29 12%, #2d1722 18%, #40172a 27%, #4a1c24 36%, #501c20 41%, #4a1525 46%, #381826 54%, #3f172b 64%, #4a1a38 73%, #501a32 80%, #5c1e24 89%, #69231a 100%);
  background-clip: padding-box;
  box-shadow: 0 0 80px rgba(0, 0, 0, 0.3);
}

.slot {
  flex-direction: column;
  justify-content: flex-start;
  gap: 21px;
  width: 144px;
  height: 160px;
  padding-top: 21px;
}

.icon {
  width: 110px;
  height: 110px;
  overflow: visible;
}

.icon.big {
  width: 120px;
  height: 120px;
  margin: -5px;
}

.glyph {
  fill: #fff;
  font: 700 32px "Open Sans", sans-serif;
  text-anchor: middle;
}

.dot {
  width: 8px;
  height: 8px;
  border-radius: 50%;
  background: #c093ac;
}

.divider {
  width: 2px;
  height: 122px;
  margin: 20px 31px 0;
  background: rgba(255, 190, 215, 0.35);
}
</style>
